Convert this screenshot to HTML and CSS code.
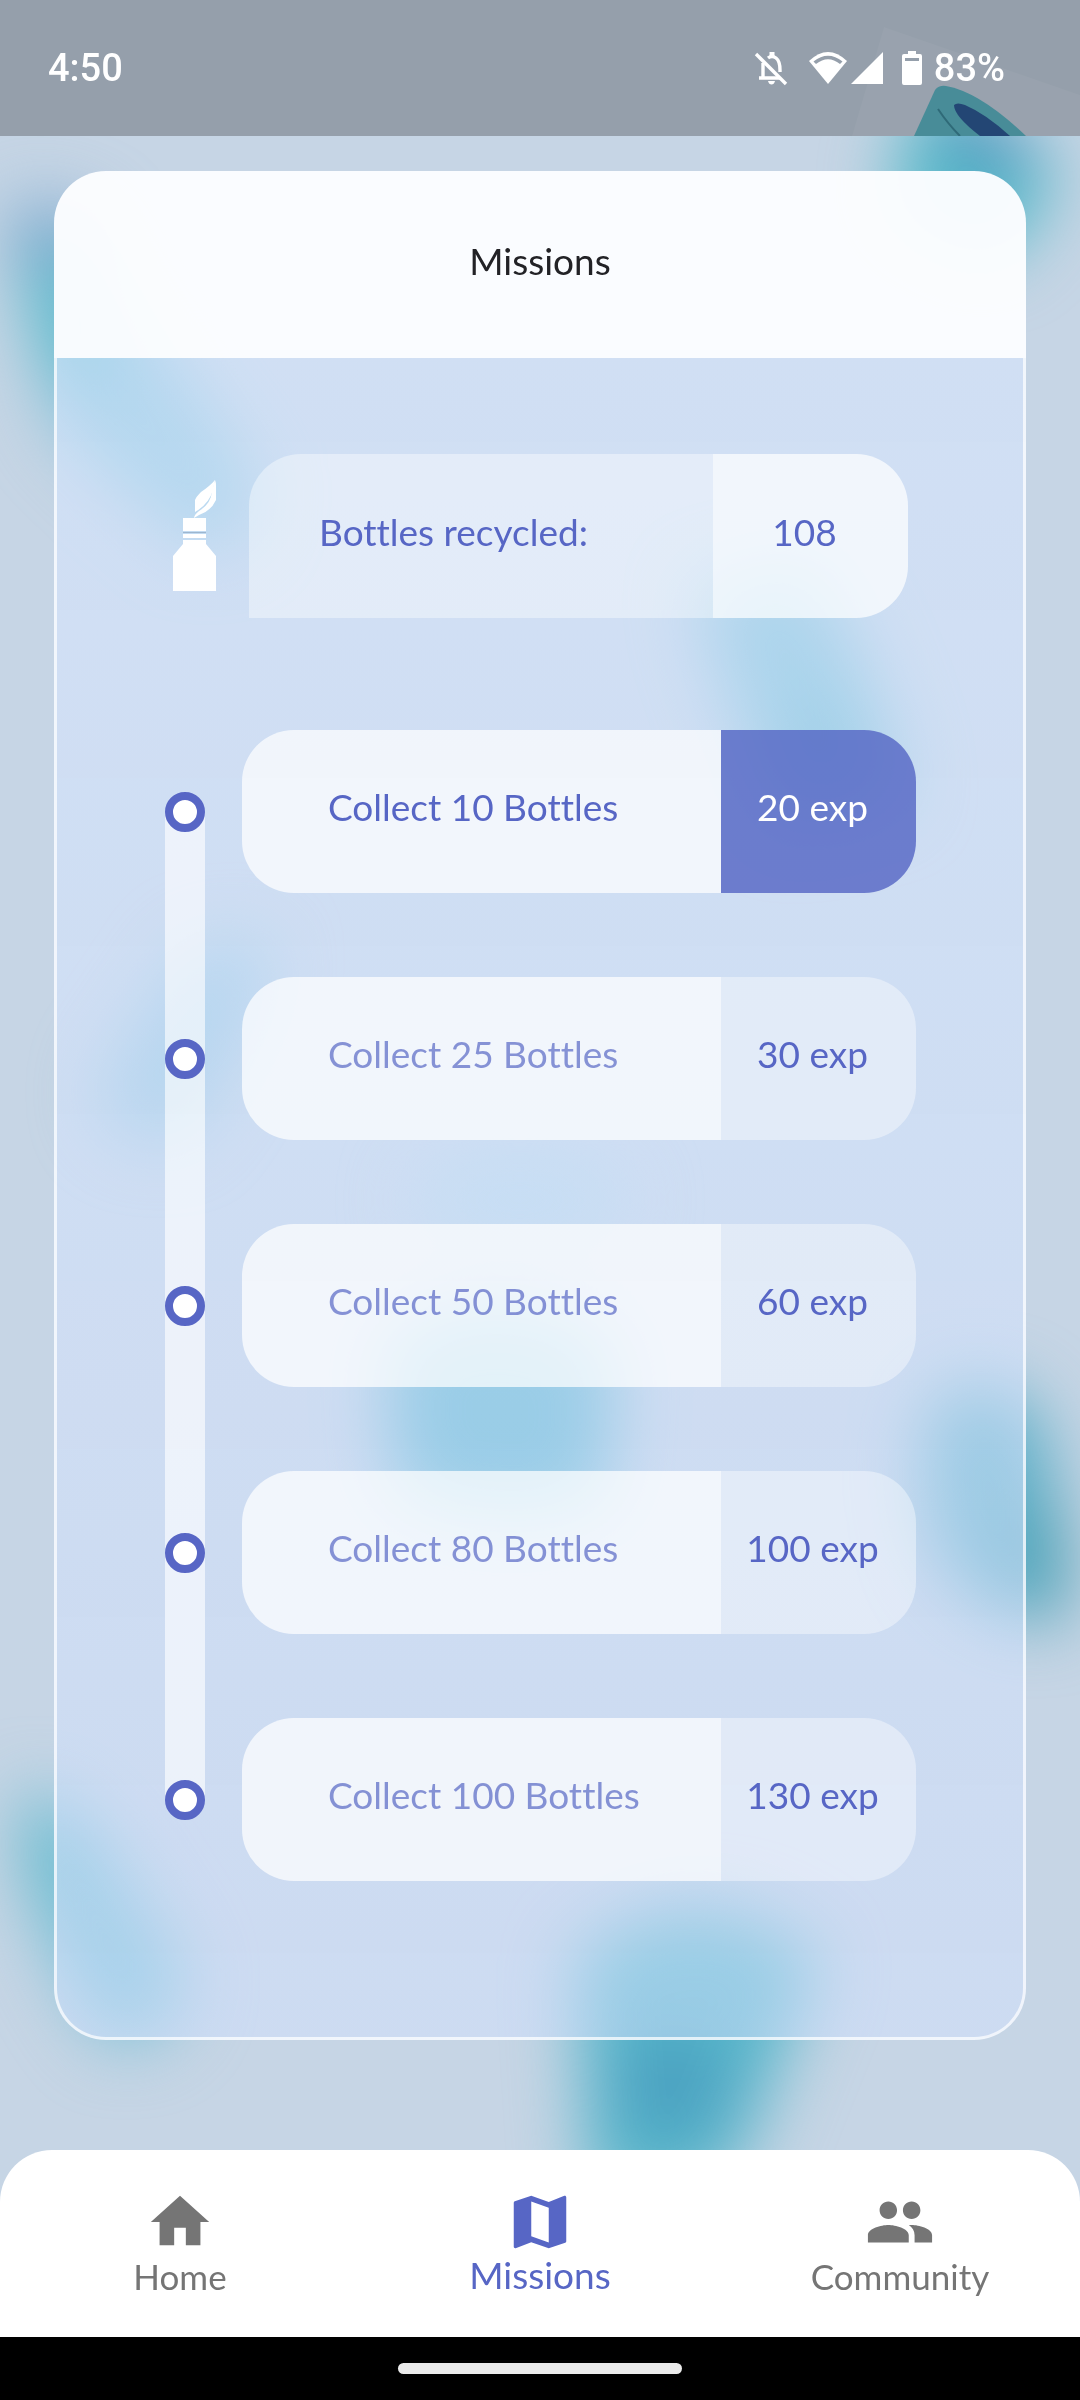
FILE: index.html
```html
<!DOCTYPE html>
<html lang="en">
<head>
<meta charset="utf-8">
<meta name="viewport" content="width=device-width, initial-scale=1">
<title>Missions</title>
<link rel="stylesheet" href="styles.css">
</head>
<body>
<div class="screen">
  <svg class="backdrop" viewBox="0 0 1080 2400" preserveAspectRatio="xMidYMid slice" aria-hidden="true">
    <g class="soft">
      <path d="M900 150 L925 90 Q990 95 1055 165 Q1045 230 985 265 L890 215Z" fill="#55bac9"/>
      <ellipse cx="985" cy="140" rx="44" ry="26" transform="rotate(40 985 140)" fill="#5590bd"/>
      <path d="M10 205 Q50 190 95 240 L250 470 Q265 545 200 550 Q120 490 55 420Z" fill="#86c3da"/>
      <ellipse cx="55" cy="240" rx="46" ry="32" fill="#7ba3cb"/>
      <ellipse cx="66" cy="320" rx="30" ry="75" transform="rotate(-20 66 320)" fill="#52b8c9"/>
      <path d="M695 590 L810 560 Q880 680 905 800 L780 830 Q725 700 695 590Z" fill="#74bdd3"/>
      <ellipse cx="825" cy="745" rx="40" ry="60" fill="#5fb6cc"/>
      <path d="M195 945 L270 940 Q260 1040 180 1140 Q105 1145 100 1085Z" fill="#8fc4dc"/>
      <path d="M385 1345 Q500 1265 615 1350 L605 1500 Q500 1540 395 1490Z" fill="#52b2cc"/>
      <ellipse cx="520" cy="1200" rx="110" ry="50" fill="#b4d5e8"/>
      <path d="M935 1400 Q1000 1360 1045 1430 L1068 1610 Q1010 1640 945 1570 Q905 1480 935 1400Z" fill="#5aaec6"/>
      <ellipse cx="1045" cy="1560" rx="18" ry="65" fill="#3795a8"/>
      <path d="M20 1790 Q70 1790 110 1850 L185 1970 Q180 2040 115 2045 Q30 1960 20 1790Z" fill="#76c0d6"/>
      <ellipse cx="44" cy="1865" rx="16" ry="55" transform="rotate(-15 44 1865)" fill="#55b5c6"/>
      <path d="M575 1960 Q690 1860 820 1960 L760 2110 Q730 2200 680 2200 L590 2200Z" fill="#56b6ca"/>
      <ellipse cx="672" cy="2085" rx="55" ry="50" fill="#4a9fc0"/>
    </g>
  </svg>

  <header class="status">
    <svg class="status-art" viewBox="0 0 240 136" aria-hidden="true">
      <path d="M44 27 L240 95 V136 H12Z" fill="#fff" opacity=".04"/>
      <path d="M74 136 L95 90 Q99 85 106 86 Q140 92 186 136Z" fill="#488c98"/>
      <path d="M114 105 Q117 102 125 105 Q146 114 170 136 H140 Q114 116 114 105Z" fill="#234674"/>
      <path d="M98 109 Q108 124 120 136" fill="none" stroke="#2f6a78" stroke-width="2"/>
    </svg>
    <span class="clock">4:50</span>
    <span class="indicators">
      <svg width="34" height="36" viewBox="0 0 34 36" fill="none" stroke="#fff" stroke-width="3.4" aria-hidden="true">
        <path d="M5 28 H26 M9 28 V13 M14 8 Q18 5 22 8 Q26 11 26 20 V22"/>
        <path d="M2 4 L32 34"/>
        <path d="M18 2 V6" stroke-width="5"/>
        <path d="M14 31 H21 Q20 34.500 17.500 34.500 Q15 34.500 14 31Z" fill="#fff" stroke="none"/>
      </svg>
      <svg class="wifi" width="76" height="36" viewBox="0 0 76 36" aria-hidden="true">
        <path d="M20 34 L1 11 Q20 -7 39 11Z" fill="#fff"/>
        <path d="M5.500 11.500 Q20 0 34.500 11.500 L32 14 Q20 4.500 8 14Z" fill="#959fab"/>
        <path d="M43 34 H75 V2Z" fill="#fff"/>
      </svg>
      <svg class="battery" width="20" height="36" viewBox="0 0 20 36" aria-hidden="true">
        <path d="M6 1 H14 V4 H18 Q20 4 20 6 V33 Q20 35 18 35 H2 Q0 35 0 33 V6 Q0 4 2 4 H6Z" fill="#fff"/>
        <path d="M3 8 H17 V11 H3Z" fill="#959fab"/>
      </svg>
      <span>83%</span>
    </span>
  </header>

  <main class="content">
    <section class="card">
      <h1 class="card-title">Missions</h1>
      <div class="card-body">
        <div class="summary">
          <svg class="bottle" width="44" height="116" viewBox="0 0 44 116" fill="#fff" aria-hidden="true">
            <path d="M22 34 V22 Q23 19 28 14 Q37 8 42 2 L40 12 Q36 26 22 34Z"/>
            <path d="M42 2 Q43 4 43 8 V22 Q38 33 26 37 L21 40 Q21 37 26 33 Q38 26 39 13Z"/>
            <path d="M10 40 H33 V53 H10Z M10 56 H33 V60 H10Z M10 62 H33 V66 L43 78 V113 H0 V78 L10 66Z"/>
            <path d="M10 54 H33 V55 H10Z" fill="#9db6cf"/>
          </svg>
          <div class="pill total">
            <span class="label">Bottles recycled:</span>
            <span class="value">108</span>
          </div>
        </div>
        <ol class="missions">
          <li><span class="rail"><i class="dot"></i></span><div class="pill done"><span class="label">Collect 10 Bottles</span><span class="value">20 exp</span></div></li>
          <li><span class="rail"><i class="dot"></i></span><div class="pill"><span class="label">Collect 25 Bottles</span><span class="value">30 exp</span></div></li>
          <li><span class="rail"><i class="dot"></i></span><div class="pill"><span class="label">Collect 50 Bottles</span><span class="value">60 exp</span></div></li>
          <li><span class="rail"><i class="dot"></i></span><div class="pill"><span class="label">Collect 80 Bottles</span><span class="value">100 exp</span></div></li>
          <li><span class="rail"><i class="dot"></i></span><div class="pill"><span class="label">Collect 100 Bottles</span><span class="value">130 exp</span></div></li>
        </ol>
      </div>
    </section>
  </main>

  <nav class="tabs">
    <a class="tab" href="#home">
      <svg viewBox="0 0 24 24" aria-hidden="true"><path d="M10 20v-6h4v6h5v-8h3L12 3 2 12h3v8z"/></svg>
      <span>Home</span>
    </a>
    <a class="tab active" href="#missions" aria-current="page">
      <svg viewBox="0 0 24 24" aria-hidden="true"><path d="M20.500 3l-.16.03L15 5.100 9 3 3.360 4.900c-.21.07-.36.25-.36.480V20.500c0 .28.22.5.5.5l.16-.03L9 18.900l6 2.100 5.640-1.900c.21-.07.36-.25.36-.480V3.500c0-.28-.22-.5-.5-.5zM15 19l-6-2.110V5l6 2.110V19z"/></svg>
      <span>Missions</span>
    </a>
    <a class="tab" href="#community">
      <svg viewBox="0 0 24 24" aria-hidden="true"><path d="M16 11c1.660 0 2.990-1.340 2.990-3S17.660 5 16 5s-3 1.340-3 3 1.340 3 3 3zm-8 0c1.660 0 2.990-1.340 2.990-3S9.660 5 8 5 5 6.340 5 8s1.340 3 3 3zm0 2c-2.330 0-7 1.170-7 3.500V19h14v-2.500c0-2.330-4.670-3.500-7-3.500zm8 0c-.29 0-.62.02-.97.05 1.160.84 1.970 1.970 1.970 3.450V19h6v-2.500c0-2.330-4.670-3.500-7-3.500z"/></svg>
      <span>Community</span>
    </a>
  </nav>
  <div class="gesture"><span></span></div>
</div>
</body>
</html>
```
FILE: styles.css
```css
:root {
  --indigo: #5766c5;
  --radius: 52px;
}

* { box-sizing: border-box; }

body {
  margin: 0;
  font-family: Lato, "Open Sans", sans-serif;
  font-size: 37px;
  font-variant-ligatures: none;
  line-height: 44px;
  color: var(--indigo);
}

.screen {
  position: relative;
  isolation: isolate;
  display: flex;
  flex-direction: column;
  min-height: 100vh;
  overflow: hidden;
  background: #c6d5e5;
}

.backdrop {
  position: absolute;
  inset: 0;
  z-index: -1;
  width: 100%;
  height: 100%;
}

.soft { filter: blur(34px); }

/* Status bar */
.status {
  position: relative;
  isolation: isolate;
  display: flex;
  justify-content: space-between;
  align-items: center;
  height: 136px;
  padding: 0 75px 0 48px;
  background: #959fab;
  color: #fff;
  font-family: Roboto, sans-serif;
  font-size: 38px;
  font-weight: 500;
}

.status-art {
  position: absolute;
  right: 0;
  top: 0;
  z-index: -1;
  width: 240px;
  height: 136px;
}

.indicators {
  display: flex;
  align-items: center;
}

.wifi { margin-left: 20px; }
.battery { margin: 0 12px 0 18px; }

/* Card */
.content {
  flex: 1;
  display: flex;
  padding: 35px 5% 110px;
}

.card {
  flex: 1;
  display: flex;
  flex-direction: column;
}

.card-title {
  display: flex;
  align-items: center;
  justify-content: center;
  height: 187px;
  margin: 0;
  padding-bottom: 8px;
  border-radius: var(--radius) var(--radius) 0 0;
  background: rgba(252, 253, 255, 0.97);
  color: #222226;
  font-size: 37px;
  font-weight: 400;
}

.card-body {
  flex: 1;
  padding: 96px 107px 112px 108px;
  border: solid rgba(255, 255, 255, 0.7);
  border-width: 0 3px 3px;
  border-radius: 0 0 var(--radius) var(--radius);
  background: linear-gradient(rgba(216, 231, 255, 0.58), rgba(210, 224, 252, 0.54));
}

.pill {
  flex: 1;
  display: flex;
  height: 163px;
  border-radius: var(--radius);
  overflow: hidden;
}

.label,
.value {
  display: flex;
  align-items: center;
  padding-bottom: 9px;
}

.label {
  flex: 1;
  padding-left: 86px;
  background: rgba(255, 255, 255, 0.72);
  color: rgba(87, 102, 197, 0.7);
}

.value {
  justify-content: center;
  width: 195px;
  padding-right: 12px;
  background: rgba(255, 255, 255, 0.4);
}

.done .label { color: var(--indigo); }

.done .value {
  background: rgba(86, 103, 196, 0.82);
  color: #fff;
}

.summary {
  display: flex;
  align-items: center;
  gap: 32px;
  padding: 0 8px;
}

.total {
  height: 164px;
  border-bottom-left-radius: 0;
}

.total .label {
  padding-left: 70px;
  background: rgba(255, 255, 255, 0.4);
  color: var(--indigo);
}

.total .value { background: rgba(255, 255, 255, 0.72); }

.missions {
  margin: 70px 0 0;
  padding: 0;
  list-style: none;
}

.missions li {
  display: flex;
  align-items: center;
  gap: 37px;
  height: 247px;
}

.rail {
  display: flex;
  align-items: center;
  align-self: stretch;
  width: 40px;
  background: rgba(255, 255, 255, 0.62);
}

.missions li:first-child .rail {
  background: linear-gradient(transparent 50%, rgba(255, 255, 255, 0.62) 50%);
}

.missions li:last-child .rail {
  background: linear-gradient(rgba(255, 255, 255, 0.62) 50%, transparent 50%);
}

.dot {
  width: 40px;
  height: 40px;
  border: 8px solid var(--indigo);
  border-radius: 50%;
  background: #fff;
}

/* Bottom navigation */
.tabs {
  display: flex;
  height: 187px;
  padding-top: 37px;
  border-radius: var(--radius) var(--radius) 0 0;
  background: #fff;
}

.tab {
  flex: 1;
  display: flex;
  flex-direction: column;
  align-items: center;
  color: #757575;
  font-size: 35px;
  line-height: 38px;
  text-decoration: none;
}

.tab svg {
  width: 70px;
  height: 70px;
  fill: currentColor;
}

.tab.active {
  color: var(--indigo);
  font-size: 37px;
  line-height: 36px;
}

.gesture {
  display: flex;
  align-items: center;
  justify-content: center;
  height: 63px;
  background: #000;
}

.gesture span {
  width: 284px;
  height: 11px;
  border-radius: 6px;
  background: #ebebeb;
}
```
